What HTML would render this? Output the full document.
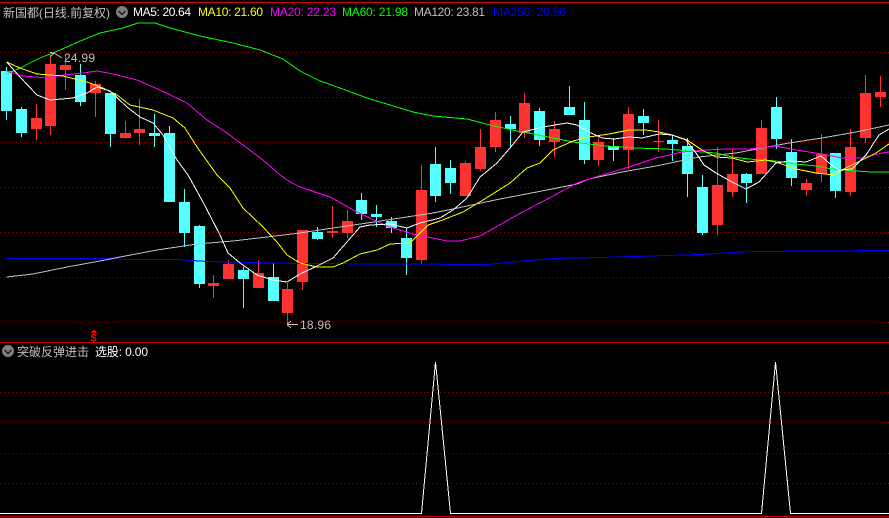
<!DOCTYPE html>
<html><head><meta charset="utf-8"><style>
html,body{margin:0;padding:0;background:#000;width:889px;height:518px;overflow:hidden}
svg{display:block}
text{font-family:"Liberation Sans","WenQuanYi Zen Hei","Noto Sans CJK SC",sans-serif;font-size:12px}
</style></head><body>
<svg width="889" height="518" viewBox="0 0 889 518" xmlns="http://www.w3.org/2000/svg">
<rect width="889" height="518" fill="#000"/>
<g shape-rendering="crispEdges">
<g stroke="#8c0000" stroke-width="1" stroke-dasharray="1 3" fill="none">
<path d="M0 52.5H889M0 97.5H889M0 142.5H889M0 187.5H889M0 232.5H889M0 277.5H889M0 322.5H889M0 392.5H889M0 422.5H889M0 453.5H889M0 483.5H889"/>
</g>
<rect x="0" y="2" width="889" height="1" fill="#c80000"/>
<rect x="0" y="342" width="889" height="1" fill="#c80000"/>
<rect x="0" y="516" width="889" height="1" fill="#c80000"/>
<path fill="#54ffff" d="M1 71h11v40h-11zM6 67h1v53h-1zM16 109h11v24h-11zM21 107h1v30h-1zM75 75h11v27h-11zM80 64h1v42h-1zM105 93h11v41h-11zM110 93h1v54h-1zM149 133h11v3h-11zM154 114h1v33h-1zM164 133h11v69h-11zM169 126h1v76h-1zM179 202h11v31h-11zM184 189h1v58h-1zM194 226h11v58h-11zM199 225h1v63h-1zM238 270h11v9h-11zM243 267h1v41h-1zM268 277h11v24h-11zM273 263h1v38h-1zM312 232h11v7h-11zM317 227h1v13h-1zM356 200h11v14h-11zM361 193h1v27h-1zM371 214h11v3h-11zM376 205h1v22h-1zM386 221h11v7h-11zM391 217h1v16h-1zM401 238h11v20h-11zM406 228h1v47h-1zM430 164h11v32h-11zM435 147h1v55h-1zM445 168h11v15h-11zM450 160h1v34h-1zM505 124h11v5h-11zM510 116h1v31h-1zM534 111h11v29h-11zM539 108h1v38h-1zM564 107h11v8h-11zM569 86h1v29h-1zM579 120h11v40h-11zM584 102h1v62h-1zM608 146h11v4h-11zM613 138h1v23h-1zM638 116h11v7h-11zM643 109h1v26h-1zM667 140h11v4h-11zM672 135h1v26h-1zM682 146h11v28h-11zM687 138h1v59h-1zM697 187h11v46h-11zM702 175h1v60h-1zM741 174h11v9h-11zM746 173h1v30h-1zM771 107h11v32h-11zM776 97h1v52h-1zM786 152h11v26h-11zM791 139h1v47h-1zM830 153h11v38h-11zM835 153h1v45h-1z"/>
<path fill="#ff3232" d="M31 118h11v11h-11zM36 104h1v36h-1zM45 64h11v62h-11zM50 55h1v80h-1zM60 65h11v5h-11zM65 55h1v35h-1zM90 84h11v9h-11zM95 81h1v36h-1zM120 133h11v5h-11zM125 121h1v18h-1zM134 129h11v4h-11zM139 99h1v46h-1zM208 283h11v3h-11zM213 275h1v23h-1zM223 264h11v15h-11zM228 260h1v19h-1zM253 273h11v15h-11zM258 260h1v28h-1zM282 289h11v24h-11zM287 283h1v41h-1zM297 230h11v52h-11zM302 230h1v60h-1zM327 231h11v2h-11zM332 206h1v32h-1zM342 221h11v12h-11zM347 210h1v28h-1zM416 190h11v70h-11zM421 165h1v99h-1zM460 163h11v33h-11zM465 161h1v35h-1zM475 147h11v22h-11zM480 129h1v42h-1zM490 120h11v27h-11zM495 112h1v40h-1zM519 103h11v30h-11zM524 93h1v45h-1zM549 129h11v13h-11zM554 121h1v36h-1zM593 142h11v18h-11zM598 138h1v28h-1zM623 114h11v36h-11zM628 107h1v62h-1zM653 141h11v1h-11zM658 120h1v32h-1zM712 185h11v40h-11zM717 147h1v88h-1zM727 174h11v18h-11zM732 150h1v47h-1zM756 128h11v46h-11zM761 120h1v54h-1zM801 183h11v7h-11zM806 179h1v17h-1zM816 154h11v20h-11zM821 134h1v48h-1zM845 147h11v45h-11zM850 129h1v67h-1zM860 93h11v45h-11zM865 75h1v68h-1zM875 92h11v5h-11zM880 76h1v31h-1z"/>
<g fill="none" stroke-width="1">
<polyline stroke="#0000ff" points="6,258.5 118,258.5 118,259.5 177,259.5 207,261.5 250,262.5 300,263.5 487,264.5 517,261.5 553,258.5 600,257.5 700,254.5 750,251.5 889,250.5"/>
<polyline stroke="#c0c0c0" points="6.7,277 33,274 67,267 100,261 120,257 157,250 197,244 233,241 267,237 300,233 333,228 367,223 400,218 433,213 453,209 500,199 547,190 577,184 589,179 622,172 656,166 699,157 736,153 762,148 789,143 822,138 856,132 889,125"/>
<polyline stroke="#00ff00" points="6.7,74 20,68 40,58 60,50 78,42 100,33 123,28 138,23 155,23 170,28 200,36 233,43 260,50 283,59 300,71 320,81 340,88 367,98 390,105 413,112 433,116 467,119 490,125 517,131 533,134 553,138 573,142 589,144 606,146 622,147 636,148 666,149 689,151 716,153 732,157 749,159 776,161 796,164 816,166 832,169 856,171 872,172 889,172"/>
<polyline stroke="#ff00ff" points="6.7,71 23,76 47,78 63,75 83,73 97,71 113,74 137,80 160,90 187,103 207,120 227,133 247,148 263,160 280,175 290,182 300,187 330,197 357,212 387,226 413,234 447,241 460,241 480,236 517,215 553,196 577,183 589,179 609,173 629,167 656,158 682,152 706,150 726,149 749,149 776,146 796,150 822,154 842,158 862,158 882,153 889,152"/>
<polyline stroke="#ffff00" points="6.7,62 20,68 37,74 63,76 87,82 103,88 117,95 130,105 153,110 173,118 185,128 197,147 217,175 230,188 243,208 263,227 277,242 287,255 300,263 317,267 333,267 343,263 360,254 377,250 390,244 410,243 428,225 440,221 463,212 483,200 510,183 527,168 540,163 553,150 573,141 589,137 609,134 629,130 646,130 659,132 672,135 687,140 702,150 716,157 732,158 747,162 766,160 779,163 796,169 816,173 834,175 846,168 862,160 876,153 889,144"/>
<polyline stroke="#ffffff" points="6.7,62 20,77 37,95 50,100 73,98 87,93 97,87 110,91 127,107 140,117 153,123 163,135 177,160 188,175 203,202 220,235 228,253 240,263 257,275 273,280 287,282 300,274 317,266 333,258 360,227 370,225 390,224 407,228 420,223 440,218 453,210 467,198 480,177 497,163 510,148 523,132 543,127 567,123 577,125 589,132 602,138 614,139 629,137 642,138 659,134 672,135 686,140 696,153 704,165 716,173 732,182 746,189 759,182 776,163 789,161 806,162 821,156 829,163 839,170 852,169 866,155 879,135 889,129"/>
<polyline stroke="#ffffff" points="0,513.5 421.5,513.5 435.5,362 450.5,513.5 761.5,513.5 775.5,362 790.5,513.5 889,513.5"/>
<path stroke="#c0c0c0" d="M50 57L54 53L50 52.5M54 53L62 58M287 324.5H298M287 324.5L291 321M287 324.5L291 328"/>
</g>
<path fill="#ff0000" d="M93 330h2v1h1v1h1v1h-6v-1h1v-1h1z"/>
</g>
<text x="90.5" y="341.5" fill="#ff0000" font-weight="bold" style="font-size:11px">$</text>
<text x="3" y="17" fill="#c0c0c0" textLength="107" lengthAdjust="spacing">新国都(日线.前复权)</text>
<circle cx="122" cy="12" r="6" fill="#808080"/>
<path d="M118.5 11L122 14.5L125.5 11" stroke="#1c1c1c" stroke-width="1.4" fill="none"/>
<text x="133" y="16" fill="#ffffff" textLength="58" lengthAdjust="spacing">MA5: 20.64</text>
<text x="198" y="16" fill="#ffff00" textLength="65" lengthAdjust="spacing">MA10: 21.60</text>
<text x="270" y="16" fill="#ff00ff" textLength="66" lengthAdjust="spacing">MA20: 22.23</text>
<text x="342" y="16" fill="#00ff00" textLength="66" lengthAdjust="spacing">MA60: 21.98</text>
<text x="414" y="16" fill="#c0c0c0" textLength="71" lengthAdjust="spacing">MA120: 23.81</text>
<text x="493" y="16" fill="#0000ff" textLength="73" lengthAdjust="spacing">MA250: 20.56</text>
<text x="64" y="62" fill="#c0c0c0" textLength="31" lengthAdjust="spacing">24.99</text>
<text x="300" y="329" fill="#c0c0c0" textLength="31" lengthAdjust="spacing">18.96</text>
<circle cx="8" cy="351" r="6" fill="#808080"/>
<path d="M4.5 350L8 353.5L11.5 350" stroke="#1c1c1c" stroke-width="1.4" fill="none"/>
<text x="17" y="356" fill="#c0c0c0" textLength="72" lengthAdjust="spacing">突破反弹进击</text>
<text x="95" y="356" fill="#ffffff" textLength="53" lengthAdjust="spacing">选股: 0.00</text>
</svg>
</body></html>
